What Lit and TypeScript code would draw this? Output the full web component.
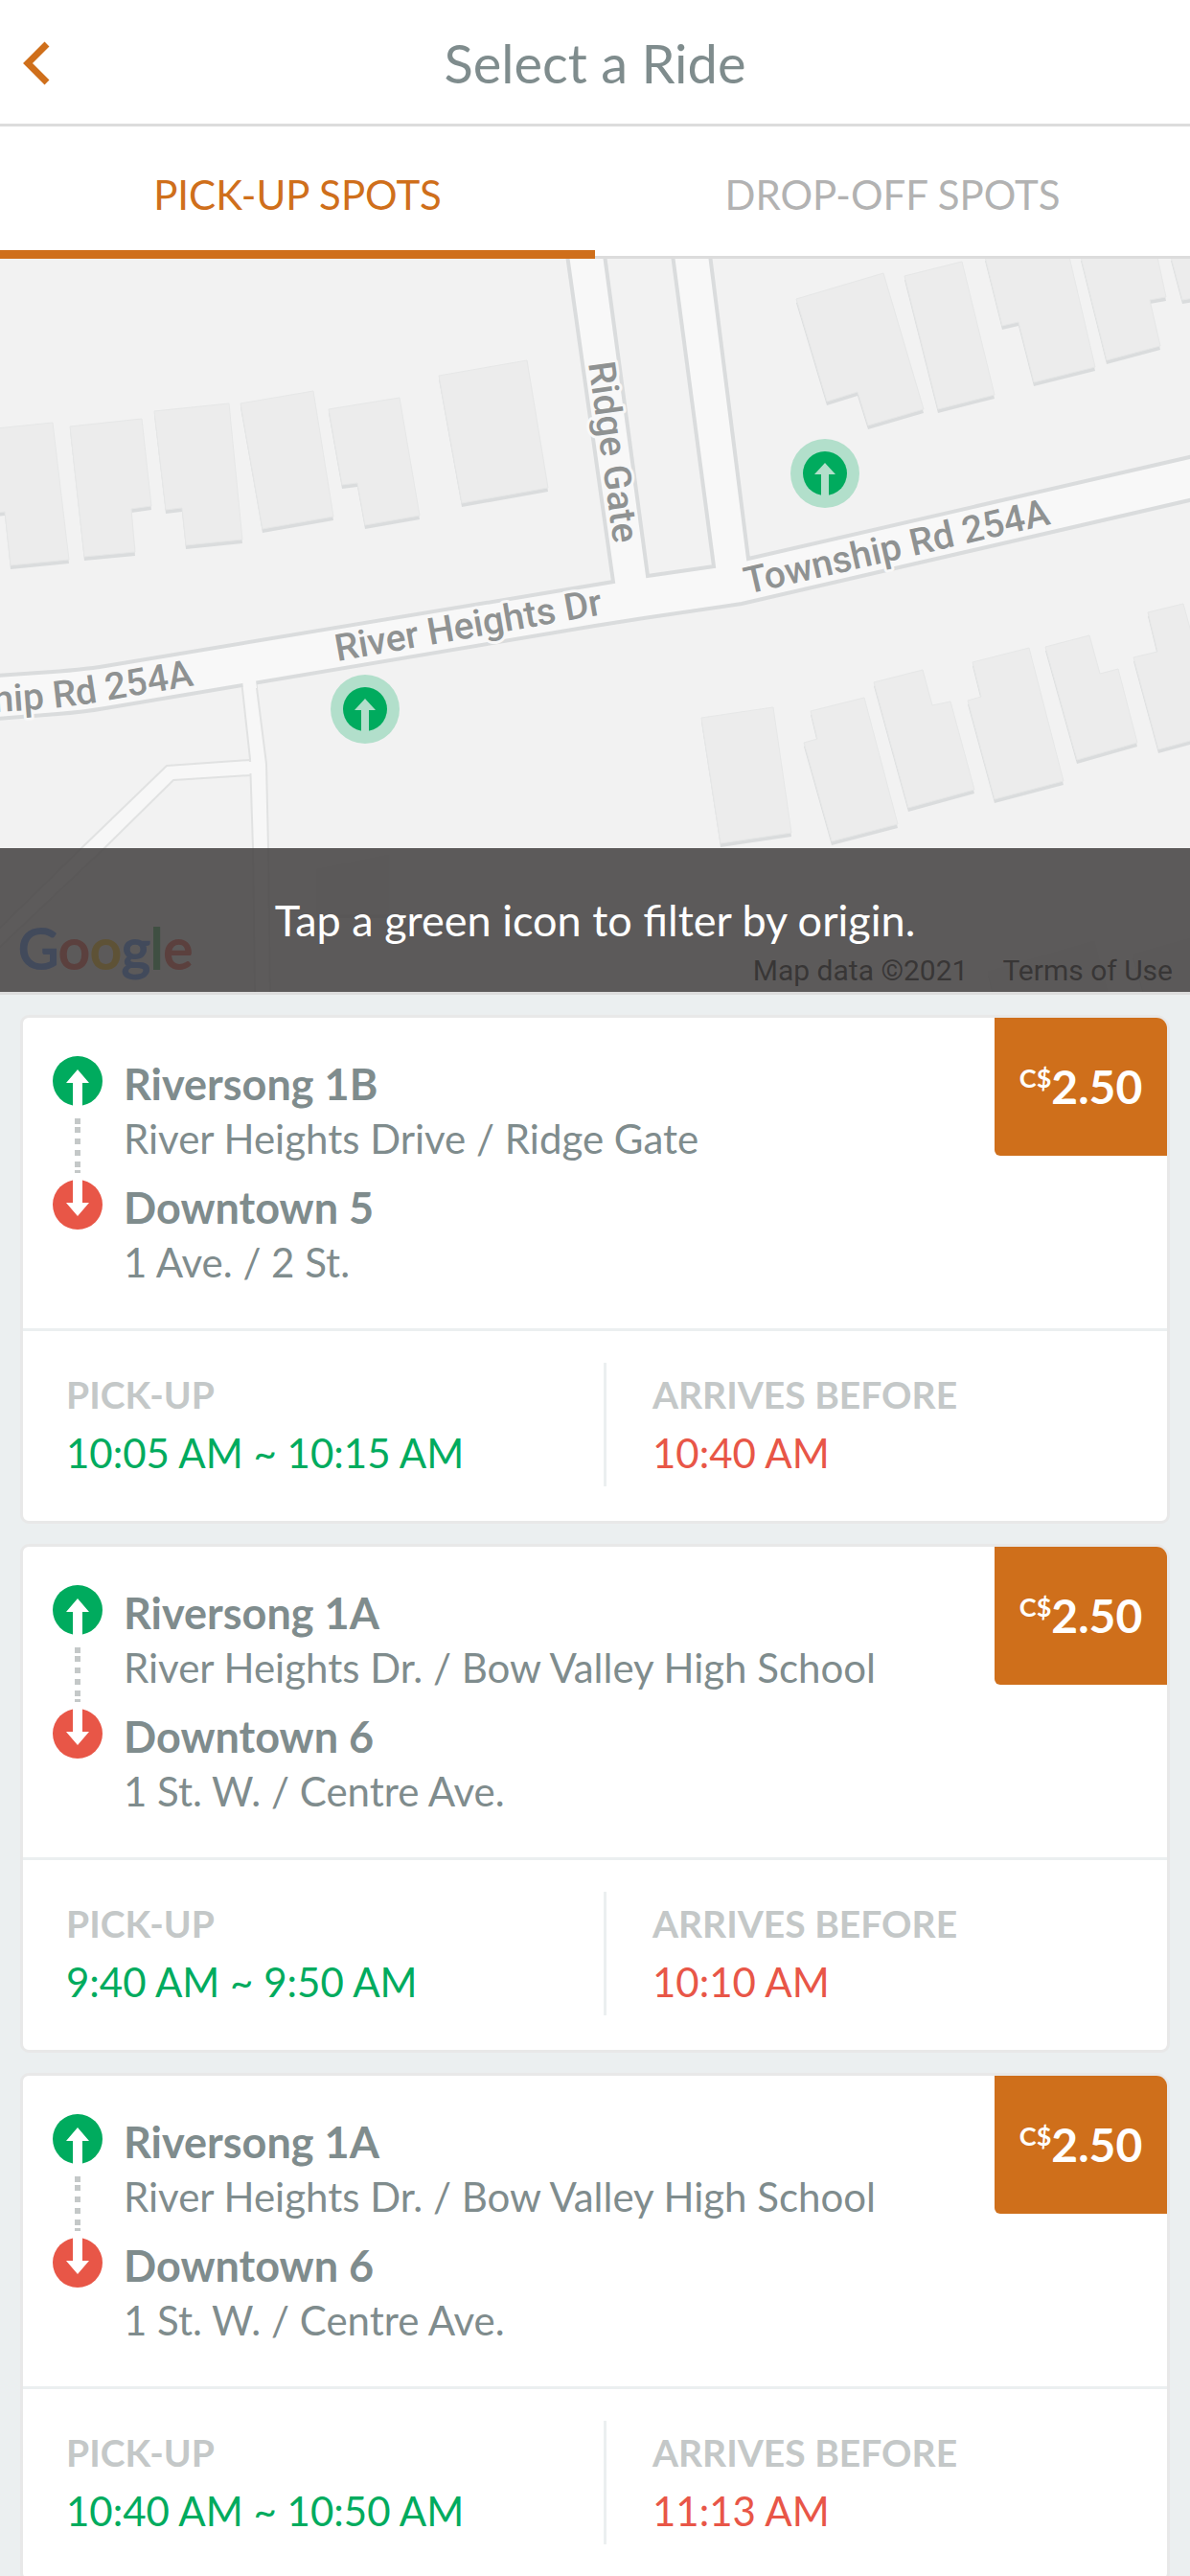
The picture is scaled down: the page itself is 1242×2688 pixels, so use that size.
import { LitElement, html, css, svg } from "lit";
import { customElement, property, state } from "lit/decorators.js";

interface Ride {
  from: string;
  fromPlace: string;
  to: string;
  toPlace: string;
  pickup: string;
  arrival: string;
  currency: string;
  price: string;
}

interface Spot {
  name: string;
  x: number;
  y: number;
}

const RIDES: Ride[] = [
  {
    from: "Riversong 1B",
    fromPlace: "River Heights Drive / Ridge Gate",
    to: "Downtown 5",
    toPlace: "1 Ave. / 2 St.",
    pickup: "10:05 AM ~ 10:15 AM",
    arrival: "10:40 AM",
    currency: "C$",
    price: "2.50",
  },
  {
    from: "Riversong 1A",
    fromPlace: "River Heights Dr. / Bow Valley High School",
    to: "Downtown 6",
    toPlace: "1 St. W. / Centre Ave.",
    pickup: "9:40 AM ~ 9:50 AM",
    arrival: "10:10 AM",
    currency: "C$",
    price: "2.50",
  },
  {
    from: "Riversong 1A",
    fromPlace: "River Heights Dr. / Bow Valley High School",
    to: "Downtown 6",
    toPlace: "1 St. W. / Centre Ave.",
    pickup: "10:40 AM ~ 10:50 AM",
    arrival: "11:13 AM",
    currency: "C$",
    price: "2.50",
  },
];

const MAP_WIDTH = 1242;
const MAP_HEIGHT = 765;

const SPOTS: Spot[] = [
  { name: "Riversong 1A", x: 861, y: 224 },
  { name: "Riversong 1B", x: 381, y: 470 },
];

/* Building footprints in map units. */
const BUILDINGS = [
  "-4,177 55,171 72,314 11,320 5,264 -4,265",
  "73,175 148,167 158,258 137,261 141,306 88,311",
  "161,159 239,151 253,293 194,299 190,260 173,262",
  "251,151 327,138 348,269 274,282",
  "343,157 417,145 438,268 381,278 373,234 357,236",
  "458,122 550,106 572,239 482,255",
  "831,42 922,15 964,157 906,174 895,139 863,149",
  "944,18 1004,3 1038,142 979,157",
  "1028,-2 1116,-2 1143,113 1079,129 1063,66 1046,70",
  "1128,-2 1208,-2 1217,40 1200,43 1211,91 1155,106",
  "1222,-2 1246,-2 1246,41 1234,43",
  "732,479 807,468 826,599 752,610",
  "846,472 902,458 937,590 868,608 839,505 853,501",
  "912,442 963,429 973,466 992,462 1017,554 948,573",
  "1015,421 1074,406 1110,545 1038,564 1010,461 1024,457",
  "1091,405 1137,393 1148,433 1167,428 1187,505 1124,523",
  "1198,369 1235,360 1246,400 1246,502 1209,512 1183,416 1208,410",
  "331,637 406,622 406,684 331,684",
  "1031,744 1142,712 1160,780 1040,780",
  "1182,726 1246,708 1246,780 1198,780",
];

@customElement("ride-map")
export class RideMap extends LitElement {
  static styles = css`
    :host {
      display: block;
      position: relative;
      overflow: hidden;
      background: #f2f2f2;
    }
    .canvas {
      display: block;
      width: 100%;
      height: auto;
    }
    .building-side {
      fill: #dadcdd;
    }
    .building-top {
      fill: #ececec;
      stroke: #e6e7e7;
      stroke-width: 1;
    }
    .lane {
      fill: #f7f7f7;
      stroke: #e1e2e2;
      stroke-width: 2;
      stroke-linejoin: round;
    }
    .lane-join {
      fill: #f7f7f7;
    }
    .road {
      fill: #f8f8f8;
      stroke: #dadcdd;
      stroke-width: 4;
    }
    .road-name {
      font: 500 39px Roboto, sans-serif;
      fill: #8f9292;
      stroke: #f8f8f8;
      stroke-width: 6;
      stroke-linejoin: round;
      paint-order: stroke;
    }
    .brand {
      font: 400 58px Lato, sans-serif;
      stroke-width: 2;
    }
    .blue {
      fill: #4285f4;
      stroke: #4285f4;
    }
    .red {
      fill: #ea4335;
      stroke: #ea4335;
    }
    .yellow {
      fill: #fbbc05;
      stroke: #fbbc05;
    }
    .green {
      fill: #34a853;
      stroke: #34a853;
    }
    .pin {
      position: absolute;
      width: 72px;
      height: 72px;
      margin: 0;
      padding: 0;
      border: 0;
      background: none;
      transform: translate(-50%, -50%);
      cursor: pointer;
    }
    .pin svg {
      display: block;
    }
    .credits {
      position: absolute;
      right: 18px;
      bottom: 4px;
      display: flex;
      gap: 36px;
      font: 30px/36px Roboto, sans-serif;
      color: #000;
    }
    .credits a {
      color: inherit;
      text-decoration: none;
    }
    .hint {
      position: absolute;
      inset: auto 0 0 0;
      margin: 0;
      padding: 48px 24px;
      background: rgba(66, 63, 64, 0.85);
      color: #fff;
      font-size: 45px;
      line-height: 54px;
      text-align: center;
      pointer-events: none;
    }
  `;

  render() {
    return html`
      <svg class="canvas" viewBox="0 0 ${MAP_WIDTH} ${MAP_HEIGHT}" role="img" aria-label="Map">
        ${BUILDINGS.map(
          (points) => svg`
            <polygon class="building-side" points=${points} transform="translate(0 4)"></polygon>
            <polygon class="building-top" points=${points}></polygon>`
        )}
        <path class="lane" d="M261 523 L174 529 L85 615 L-4 702 V722 L109 615 L181 544 L262 539 Z"></path>
        <path class="lane" d="M252 440 L261 522 L264 615 L266 770 H282 L280 615 L278 527 L267 440 Z"></path>
        <path class="lane-join" d="M259 525 H270 V537 H259 Z"></path>
        <path
          class="road"
          d="M-4 435 L40 432 Q87 429 110 425 L640 337 L592 -4 H631 L676 331 L745 321 L702 -4 H741 L781 313 L1246 206 V251 L774 360 L672 375 L621 383 L110 469 Q87 473 60 475 L-4 480 Z"
        ></path>
        <path class="lane-join" d="M253 440 H267 L268 448 H254 Z"></path>
        <path id="west" fill="none" d="M-200 480 L-20 474 C40 471 80 467 110 461 L203 445"></path>
        <text class="road-name" text-anchor="end">
          <textPath href="#west" startOffset="100%">Township Rd 254A</textPath>
        </text>
        <text class="road-name" transform="translate(352 420) rotate(-10)">River Heights Dr</text>
        <text class="road-name" transform="translate(780 350) rotate(-13)">Township Rd 254A</text>
        <text class="road-name" transform="translate(614 109) rotate(82)">Ridge Gate</text>
        <text class="brand" x="19" y="741"><tspan class="blue">G</tspan><tspan class="red">o</tspan><tspan class="yellow">o</tspan><tspan class="blue">g</tspan><tspan class="green">l</tspan><tspan class="red">e</tspan></text>
      </svg>
      ${SPOTS.map(
        (spot) => html`
          <button
            class="pin"
            aria-label=${spot.name}
            style="left:${(spot.x / MAP_WIDTH) * 100}%;top:${(spot.y / MAP_HEIGHT) * 100}%"
          >
            <svg viewBox="0 0 72 72" width="72" height="72" aria-hidden="true">
              <circle cx="36" cy="36" r="36" fill="#b2dfcb"></circle>
              <circle cx="36" cy="36" r="23" fill="#00ab5e"></circle>
              <path d="M36 25 L47 37 H40 V60 H32 V37 H25 Z" fill="#b2dfcb"></path>
            </svg>
          </button>
        `
      )}
      <div class="credits"><span>Map data ©2021</span><a href="#terms">Terms of Use</a></div>
      <p class="hint">Tap a green icon to filter by origin.</p>
    `;
  }
}

@customElement("ride-card")
export class RideCard extends LitElement {
  @property({ attribute: false }) ride!: Ride;

  static styles = css`
    :host {
      display: block;
    }
    .card {
      border: 3px solid #e8e8e8;
      border-radius: 9px 15px 9px 9px;
      background: #fff;
    }
    .top {
      display: flex;
      align-items: flex-start;
      border-bottom: 3px solid #ebeff0;
    }
    .route {
      flex: 1;
      display: flex;
      gap: 22px;
      padding: 40px 0 40px 31px;
    }
    .rail {
      flex: none;
    }
    .stops {
      display: flex;
      flex-direction: column;
      gap: 15px;
      margin: 0;
      padding: 1px 0 0;
      list-style: none;
      color: #7f8c8d;
    }
    .name,
    .place {
      margin: 0;
      font-size: 45px;
      line-height: 57px;
      font-weight: 700;
    }
    .place {
      font-size: 42px;
      font-weight: 400;
    }
    .price {
      display: flex;
      justify-content: center;
      align-items: center;
      width: 180px;
      height: 144px;
      border-radius: 0 11px 0 6px;
      background: #cf6f1b;
      color: #fff;
      font-size: 48px;
      line-height: 60px;
      font-weight: 700;
    }
    .currency {
      align-self: flex-start;
      margin-top: 45px;
      font-size: 27px;
      line-height: 36px;
    }
    .times {
      display: grid;
      grid-template-columns: 203fr 197fr;
      margin: 0;
      padding: 33px 0 36px;
    }
    .time {
      padding: 9px 0 6px 45px;
    }
    .time + .time {
      padding-left: 48px;
      border-left: 3px solid #ebeff0;
    }
    dt {
      color: #c4c8c8;
      font-size: 39px;
      line-height: 48px;
      font-weight: 700;
    }
    dd {
      margin: 9px 0 0;
      font-size: 42px;
      line-height: 57px;
    }
    .pickup {
      color: #00ab5e;
    }
    .arrival {
      color: #e85647;
    }
  `;

  render() {
    const r = this.ride;
    return html`
      <article class="card">
        <div class="top">
          <div class="route">
            <svg class="rail" width="52" height="181" viewBox="0 0 52 181" aria-hidden="true">
              <circle cx="26" cy="26" r="26" fill="#00ab5e"></circle>
              <path d="M26 14 L38 28 H31 V53 H21 V28 H14 Z" fill="#fff"></path>
              <path
                d="M23 65h6v6h-6z M23 74h6v6h-6z M23 86h6v6h-6z M23 98h6v6h-6z M23 110h6v6h-6z M23 119h6v3h-6z"
                fill="#c4c8c8"
              ></path>
              <circle cx="26" cy="155" r="26" fill="#e85647"></circle>
              <path d="M26 167 L38 153 H31 V128 H21 V153 H14 Z" fill="#fff"></path>
            </svg>
            <ul class="stops">
              <li>
                <p class="name">${r.from}</p>
                <p class="place">${r.fromPlace}</p>
              </li>
              <li>
                <p class="name">${r.to}</p>
                <p class="place">${r.toPlace}</p>
              </li>
            </ul>
          </div>
          <div class="price"><span class="currency">${r.currency}</span><span>${r.price}</span></div>
        </div>
        <dl class="times">
          <div class="time">
            <dt>PICK-UP</dt>
            <dd class="pickup">${r.pickup}</dd>
          </div>
          <div class="time">
            <dt>ARRIVES BEFORE</dt>
            <dd class="arrival">${r.arrival}</dd>
          </div>
        </dl>
      </article>
    `;
  }
}

@customElement("app-root")
export class AppRoot extends LitElement {
  @state() private tab = 0;

  static styles = css`
    :host {
      display: block;
      height: 100vh;
      overflow: hidden;
      background: #ebeff0;
      font-family: Lato, sans-serif;
    }
    .header {
      display: grid;
      grid-template-columns: 96px 1fr 96px;
      align-items: center;
      padding: 33px 0 30px;
      border-bottom: 3px solid #dcdcdc;
      background: #fff;
    }
    .back {
      display: flex;
      justify-content: flex-start;
      padding: 0 0 0 21px;
      border: 0;
      background: none;
      cursor: pointer;
    }
    .title {
      margin: 0;
      color: #7f8c8d;
      font-size: 56px;
      line-height: 66px;
      font-weight: 400;
      text-align: center;
    }
    .tabs {
      display: grid;
      grid-template-columns: 1fr 1fr;
      background: #fff;
    }
    .tab {
      padding: 41px 0 37px;
      border: 0;
      background: none;
      box-shadow: inset 0 -3px #dcdcdc;
      color: #b2b2b2;
      font: 400 42px/60px Lato, sans-serif;
      cursor: pointer;
    }
    .tab[aria-selected="true"] {
      box-shadow: inset 0 -9px #cf6f1b;
      color: #cf6f1b;
    }
    .rides {
      display: flex;
      flex-direction: column;
      gap: 21px;
      padding: 21px;
      border-top: 3px solid #dcdcdc;
    }
  `;

  render() {
    const tabs = ["PICK-UP SPOTS", "DROP-OFF SPOTS"];
    return html`
      <header class="header">
        <button class="back" aria-label="Back">
          <svg width="33" height="48" viewBox="0 0 33 48" aria-hidden="true">
            <path d="M28 4 L8 24 L28 44" fill="none" stroke="#cf6f1b" stroke-width="7"></path>
          </svg>
        </button>
        <h1 class="title">Select a Ride</h1>
      </header>
      <div class="tabs" role="tablist">
        ${tabs.map(
          (label, i) => html`
            <button
              class="tab"
              role="tab"
              aria-selected=${this.tab === i ? "true" : "false"}
              @click=${() => (this.tab = i)}
            >
              ${label}
            </button>
          `
        )}
      </div>
      <ride-map></ride-map>
      <main class="rides">${RIDES.map((ride) => html`<ride-card .ride=${ride}></ride-card>`)}</main>
    `;
  }
}
